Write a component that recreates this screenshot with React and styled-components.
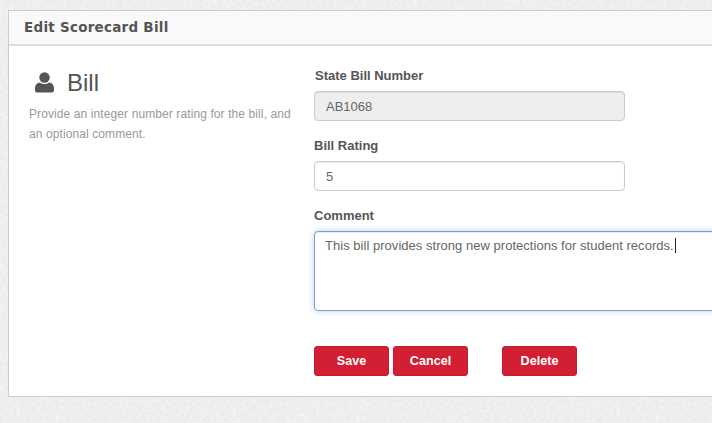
import React from 'react';
import styled, { createGlobalStyle } from 'styled-components';

const noise = encodeURIComponent(
	`<svg xmlns="http://www.w3.org/2000/svg" width="300" height="300"><filter id="n" x="0" y="0" width="100%" height="100%"><feTurbulence type="fractalNoise" baseFrequency="0.3" numOctaves="4" stitchTiles="stitch"/><feColorMatrix values="0 0 0 0 1 0 0 0 0 1 0 0 0 0 1 0.9 0 0 0 -0.32"/></filter><rect width="300" height="300" filter="url(#n)"/></svg>`,
);

const Global = createGlobalStyle`
	html, body {
		margin: 0;
		height: 100%;
		overflow: hidden;
	}

	body {
		background: #ececec url("data:image/svg+xml,${noise}");
		font-family: "Liberation Sans", Arial, sans-serif;
		color: #555;
	}
`;

const Page = styled.div`
	width: 712px;
	height: 423px;
	padding: 10px 0 0 8px;
	box-sizing: border-box;
	overflow: hidden;
`;

const Panel = styled.section`
	width: 780px;
	height: 387px;
	box-sizing: border-box;
	background: #fff;
	border: 1px solid #ccc;
	border-right: 0;
`;

const PanelHeader = styled.header`
	height: 35px;
	box-sizing: border-box;
	padding: 0 15px;
	background: #f9f9f9;
	border-bottom: 2px solid #ddd;
	display: flex;
	align-items: center;
`;

const PanelTitle = styled.h1`
	margin: 0;
	font: bold 13.5px/1 "DejaVu Sans", Verdana, sans-serif;
	color: #555;
	letter-spacing: 0.25px;
`;

const PanelBody = styled.div`
	display: flex;
	padding: 0 0 0 20px;
`;

const Intro = styled.div`
	width: 285px;
	padding-top: 23px;
`;

const IntroHeading = styled.div`
	display: flex;
	align-items: center;
	gap: 13px;
	margin-left: 6px;
	height: 28px;

	svg {
		margin-bottom: 2px;
	}
`;

const IntroTitle = styled.h2`
	margin: 0;
	font-weight: 400;
	font-size: 24px;
	line-height: 28px;
	color: #555;
`;

const IntroText = styled.p`
	margin: 7px 0 0;
	font-size: 12px;
	line-height: 20px;
	letter-spacing: 0.1px;
	color: #999;
	width: 270px;
`;

const FormColumn = styled.form`
	padding-top: 22px;
	display: flex;
	flex-direction: column;
`;

const Field = styled.div`
	margin-bottom: 17px;
`;

const Label = styled.label`
	display: block;
	margin: 0 0 7px ${({ $inset }) => ($inset ? 1 : 0)}px;
	font-size: 13px;
	font-weight: 700;
	line-height: 16px;
	color: #555;
`;

const TextInput = styled.input`
	display: block;
	width: 311px;
	height: 30px;
	box-sizing: border-box;
	padding: 0 11px;
	font: 13px "Liberation Sans", Arial, sans-serif;
	color: #666;
	background: ${({ disabled }) => (disabled ? '#eee' : '#fff')};
	border: 1px solid #ccc;
	border-radius: 4px;
	box-shadow: inset 0 1px 1px rgba(0, 0, 0, 0.075);
	outline: 0;
	opacity: 1;
	-webkit-text-fill-color: #666;
`;

const CommentBox = styled.div`
	width: 420px;
	height: 80px;
	box-sizing: border-box;
	padding: 4px 10px;
	font-size: 13px;
	line-height: 20px;
	letter-spacing: 0.03px;
	color: #666;
	background: #fff;
	border: 1px solid #7a9fcc;
	border-radius: 4px;
	box-shadow: inset 0 1px 1px rgba(0, 0, 0, 0.075), 0 0 6px rgba(102, 150, 220, 0.45);
`;

const Caret = styled.span`
	display: inline-block;
	width: 1px;
	height: 15px;
	margin-left: 1px;
	background: #222;
	vertical-align: -3px;
`;

const Actions = styled.div`
	display: flex;
	margin-top: 18px;
`;

const RedButton = styled.button`
	width: 75px;
	height: 30px;
	margin-right: ${({ $gap }) => $gap}px;
	padding: 0;
	font: bold 12.6px "Liberation Sans", Arial, sans-serif;
	color: #fff;
	background: #d21f33;
	border: 1px solid #c41c2f;
	border-radius: 3px;
`;

function UserIcon() {
	return (
		<svg width="19" height="21" viewBox="0 0 19 21" fill="#555" aria-hidden="true">
			<circle cx="9.5" cy="5.5" r="5.2" />
			<path d="M0 16.5C0 12.6 2.2 10.8 5 10.4C6.2 11.4 7.8 11.9 9.5 11.9C11.2 11.9 12.8 11.4 14 10.4C16.8 10.8 19 12.6 19 16.5V18.5C19 19.8 17.8 20.6 16 20.6H3C1.2 20.6 0 19.8 0 18.5Z" />
		</svg>
	);
}

export default function App() {
	return (
		<Page>
			<Global />
			<Panel>
				<PanelHeader>
					<PanelTitle>Edit Scorecard Bill</PanelTitle>
				</PanelHeader>
				<PanelBody>
					<Intro>
						<IntroHeading>
							<UserIcon />
							<IntroTitle>Bill</IntroTitle>
						</IntroHeading>
						<IntroText>Provide an integer number rating for the bill, and an optional comment.</IntroText>
					</Intro>
					<FormColumn onSubmit={e => e.preventDefault()}>
						<Field>
							<Label $inset>State Bill Number</Label>
							<TextInput disabled value="AB1068" readOnly />
						</Field>
						<Field>
							<Label>Bill Rating</Label>
							<TextInput value="5" readOnly />
						</Field>
						<Field>
							<Label>Comment</Label>
							<CommentBox>
								This bill provides strong new protections for student records.
								<Caret />
							</CommentBox>
						</Field>
						<Actions>
							<RedButton $gap={4}>Save</RedButton>
							<RedButton $gap={34}>Cancel</RedButton>
							<RedButton $gap={0}>Delete</RedButton>
						</Actions>
					</FormColumn>
				</PanelBody>
			</Panel>
		</Page>
	);
}
